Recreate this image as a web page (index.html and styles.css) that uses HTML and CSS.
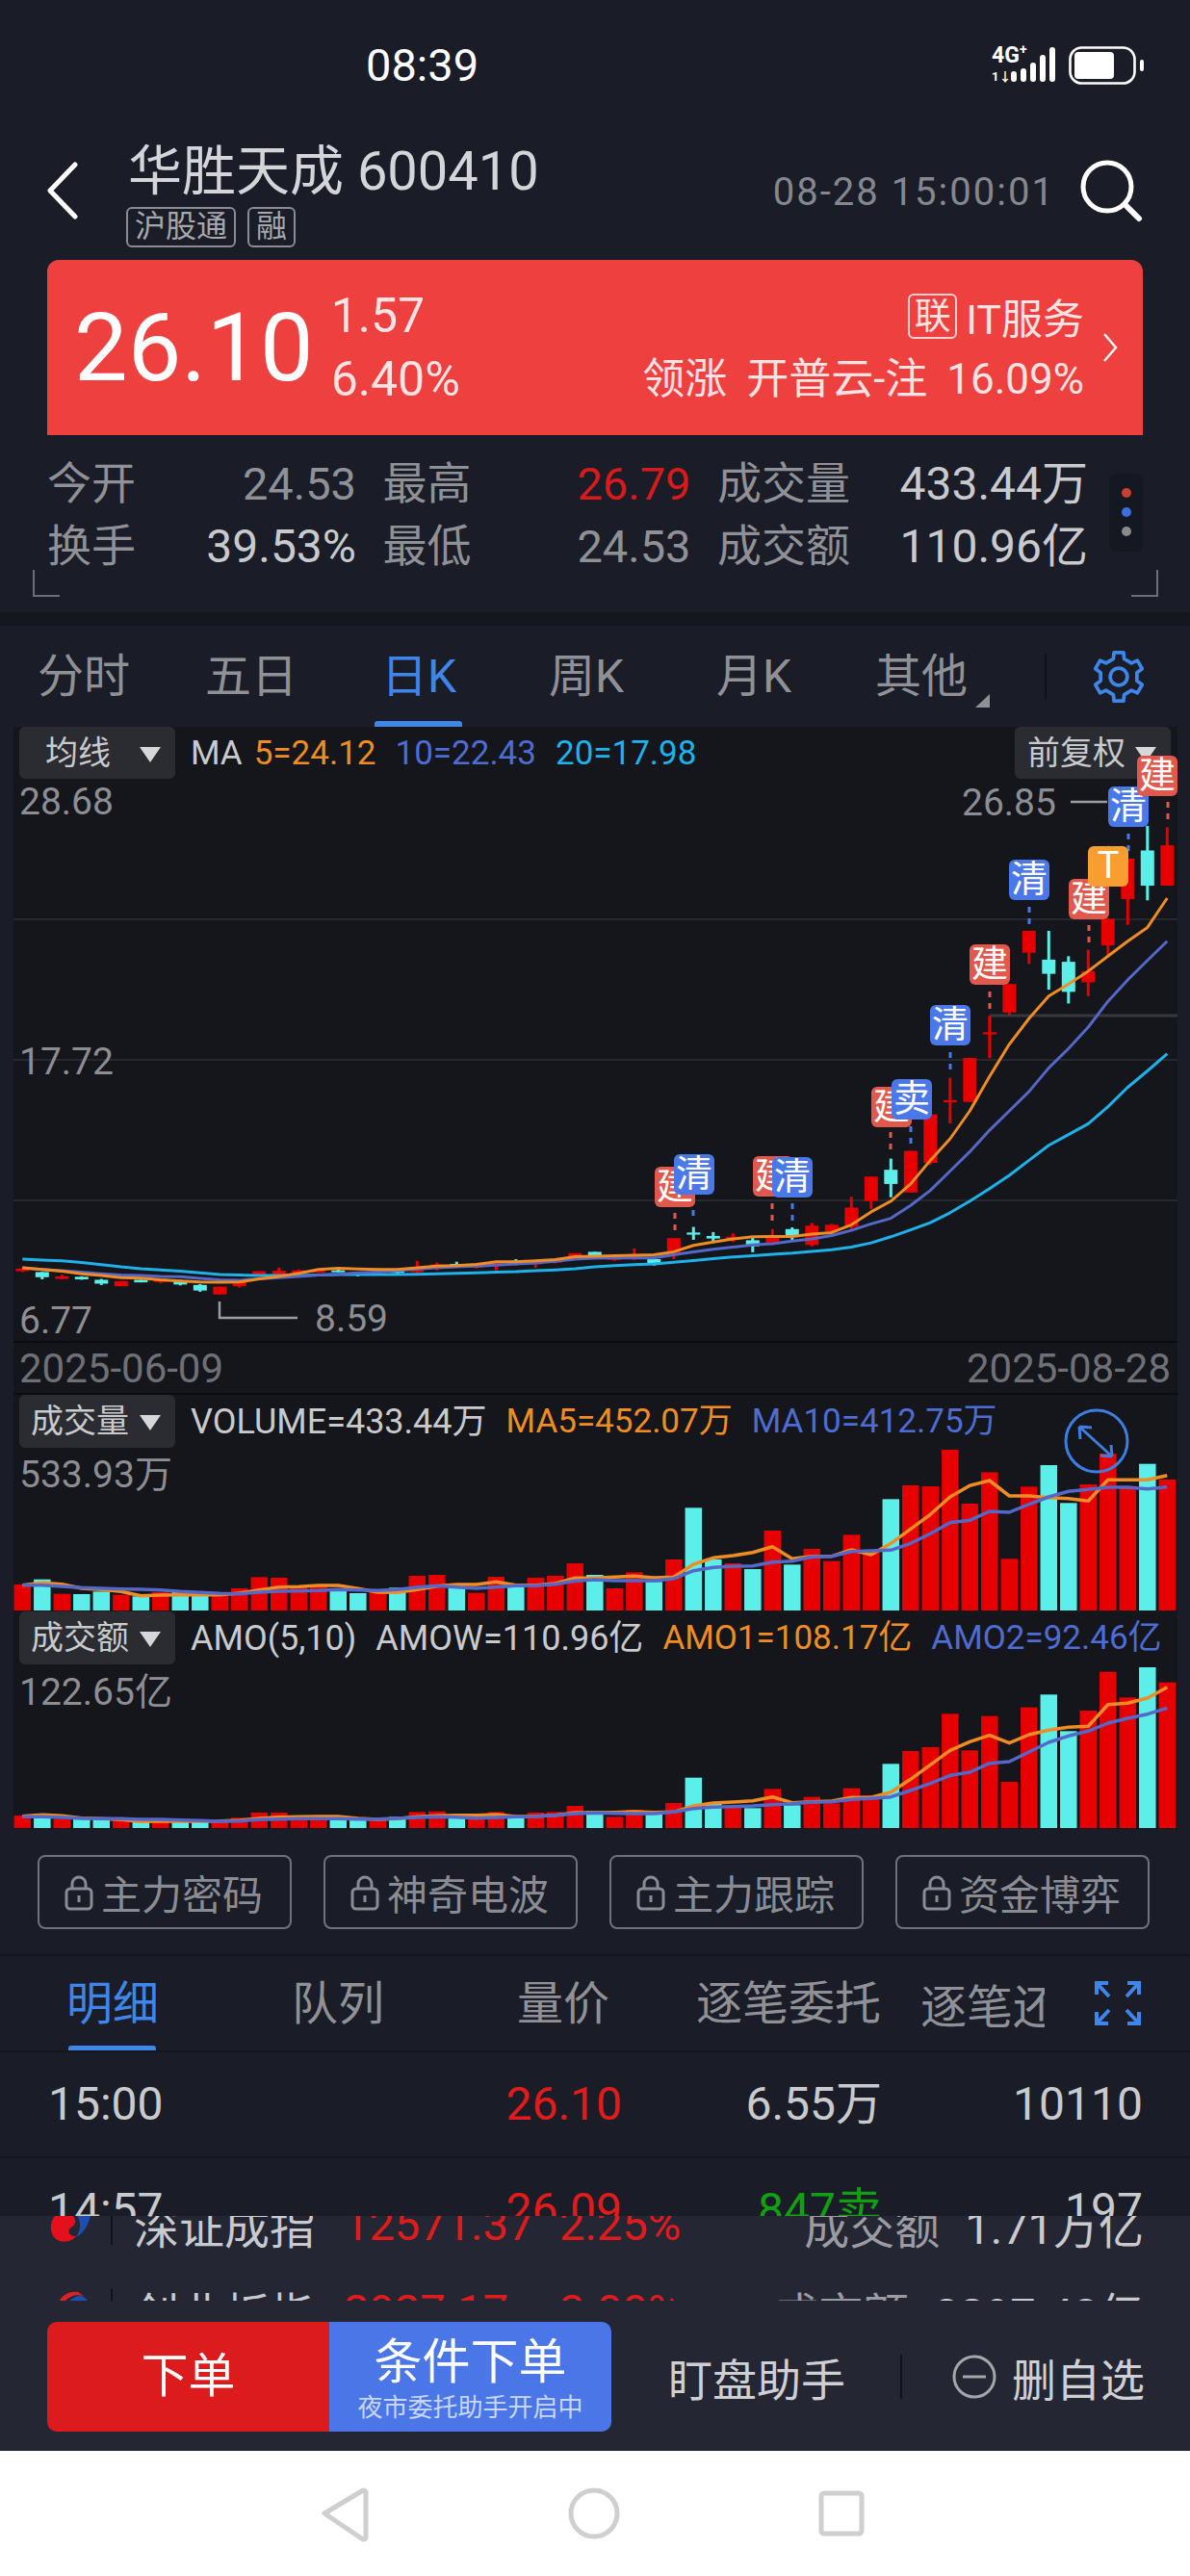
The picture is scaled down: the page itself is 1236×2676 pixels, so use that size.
FILE: index.html
```html
<!DOCTYPE html>
<html lang="en">
<head>
    <meta charset="UTF-8">
    <meta name="viewport" content="width=device-width, initial-scale=1.0">
    <title>华胜天成 600410</title>
    <link rel="stylesheet" href="styles.css">
</head>
<body>
    <div class="status-bar">
        <div class="clock">08:39</div>
        <div class="net">
            <div class="net-type"><span class="net-4g">4G<sup>+</sup></span><span class="net-sim">1↓</span></div>
            <svg class="signal" viewBox="0 0 46 36">
                <rect x="0" y="25" width="6" height="11" rx="3"/>
                <rect x="10" y="22" width="6" height="14" rx="3"/>
                <rect x="20" y="16" width="6" height="20" rx="3"/>
                <rect x="30" y="8" width="6" height="28" rx="3"/>
                <rect x="40" y="0" width="6" height="36" rx="3"/>
            </svg>
            <svg class="battery" viewBox="0 0 78 40">
                <rect x="1.5" y="1.5" width="67" height="37" rx="12" fill="none" stroke="#fff" stroke-width="2.6"/>
                <rect x="6" y="6" width="41" height="28" rx="4" fill="#fff"/>
                <rect x="74" y="14" width="4" height="12" rx="2" fill="#fff"/>
            </svg>
        </div>
    </div>

    <header class="header">
        <svg class="back-icon" viewBox="0 0 34 60">
            <path d="M30 3 L4 30 L30 57" fill="none" stroke="#fff" stroke-width="5" stroke-linecap="round" stroke-linejoin="round"/>
        </svg>
        <div class="stock-name">
            <h1 class="title">华胜天成 600410</h1>
            <div class="tags">
                <span class="tag">沪股通</span>
                <span class="tag">融</span>
            </div>
        </div>
        <div class="datetime">08-28 15:00:01</div>
        <svg class="search-icon" viewBox="0 0 66 66">
            <circle cx="29" cy="29" r="25" fill="none" stroke="#fff" stroke-width="5"/>
            <path d="M48 48 L62 62" stroke="#fff" stroke-width="6" stroke-linecap="round"/>
        </svg>
    </header>

    <section class="quote-card">
        <div class="last-price">26.10</div>
        <div class="change">
            <span>1.57</span>
            <span>6.40%</span>
        </div>
        <div class="sector">
            <div class="sector-name"><span class="sector-badge">联</span>IT服务</div>
            <div class="sector-lead">领涨 开普云-注 16.09%</div>
        </div>
        <svg class="card-arrow" viewBox="0 0 16 32">
            <path d="M2 2 L14 16 L2 30" fill="none" stroke="#fff" stroke-width="2.4"/>
        </svg>
    </section>

    <section class="stats">
        <div class="stats-grid">
            <div class="stat"><span class="stat-label">今开</span><span class="stat-dim">24.53</span></div>
            <div class="stat"><span class="stat-label">最高</span><span class="stat-red">26.79</span></div>
            <div class="stat"><span class="stat-label">成交量</span><span class="stat-value">433.44万</span></div>
            <div class="stat"><span class="stat-label">换手</span><span class="stat-value">39.53%</span></div>
            <div class="stat"><span class="stat-label">最低</span><span class="stat-dim">24.53</span></div>
            <div class="stat"><span class="stat-label">成交额</span><span class="stat-value">110.96亿</span></div>
        </div>
        <div class="page-dots"><i class="dot-red"></i><i class="dot-blue"></i><i class="dot-grey"></i></div>
        <i class="corner corner-left"></i>
        <i class="corner corner-right"></i>
    </section>

    <nav class="period-tabs">
        <div class="period">分时</div>
        <div class="period">五日</div>
        <div class="period active">日K</div>
        <div class="period">周K</div>
        <div class="period">月K</div>
        <div class="period more">其他</div>
        <i class="period-divider"></i>
        <svg class="gear-icon" viewBox="0 0 24 24">
            <path d="M9.57 4.06 L9.9 1.2 H14.1 L14.43 4.06 L17.66 5.93 L20.3 4.78 L22.4 8.42 L20.09 10.13 V13.87 L22.4 15.58 L20.3 19.22 L17.66 18.07 L14.43 19.94 L14.1 22.8 H9.9 L9.57 19.94 L6.34 18.07 L3.7 19.22 L1.6 15.58 L3.91 13.87 V10.13 L1.6 8.42 L3.7 4.78 L6.34 5.93 Z" fill="none" stroke="#3f86ea" stroke-width="1.6" stroke-linejoin="round"/>
            <circle cx="12" cy="12" r="3.8" fill="none" stroke="#3f86ea" stroke-width="1.6"/>
        </svg>
    </nav>

    <main class="chart">
        <div class="panel price-panel" id="price-panel">
            <div class="select select-left">均线<i class="caret"></i></div>
            <div class="legend">
                <span class="text-light legend-ma">MA</span>
                <span class="text-orange">5=24.12</span>
                <span class="text-blue">10=22.43</span>
                <span class="text-cyan">20=17.98</span>
            </div>
            <div class="select select-right">前复权<i class="caret"></i></div>
            <span class="axis axis-top">28.68</span>
            <span class="axis axis-mid">17.72</span>
            <span class="axis axis-low">6.77</span>
            <span class="axis peak-high">26.85</span>
            <span class="axis peak-low">8.59</span>
        </div>
        <div class="date-row">
            <span>2025-06-09</span>
            <span>2025-08-28</span>
        </div>
        <div class="panel volume-panel" id="volume-panel">
            <div class="select select-left">成交量<i class="caret"></i></div>
            <div class="legend">
                <span class="text-light">VOLUME=433.44万</span>
                <span class="text-orange">MA5=452.07万</span>
                <span class="text-blue">MA10=412.75万</span>
            </div>
            <span class="axis axis-top">533.93万</span>
        </div>
        <div class="panel amount-panel" id="amount-panel">
            <div class="select select-left">成交额<i class="caret"></i></div>
            <div class="legend">
                <span class="text-light">AMO(5,10)</span>
                <span class="text-light">AMOW=110.96亿</span>
                <span class="text-orange">AMO1=108.17亿</span>
                <span class="text-blue">AMO2=92.46亿</span>
            </div>
            <span class="axis axis-top">122.65亿</span>
        </div>
    </main>

    <div class="lock-row">
        <div class="lock-button"><svg class="lock-icon" viewBox="0 0 30 38"><path d="M8 16 V10 A7 7 0 0 1 22 10 V16" fill="none" stroke="currentColor" stroke-width="3"/><rect x="2" y="15" width="26" height="21" rx="4" fill="none" stroke="currentColor" stroke-width="3"/><rect x="13.5" y="22" width="3" height="7" fill="currentColor"/></svg>主力密码</div>
        <div class="lock-button"><svg class="lock-icon" viewBox="0 0 30 38"><path d="M8 16 V10 A7 7 0 0 1 22 10 V16" fill="none" stroke="currentColor" stroke-width="3"/><rect x="2" y="15" width="26" height="21" rx="4" fill="none" stroke="currentColor" stroke-width="3"/><rect x="13.5" y="22" width="3" height="7" fill="currentColor"/></svg>神奇电波</div>
        <div class="lock-button"><svg class="lock-icon" viewBox="0 0 30 38"><path d="M8 16 V10 A7 7 0 0 1 22 10 V16" fill="none" stroke="currentColor" stroke-width="3"/><rect x="2" y="15" width="26" height="21" rx="4" fill="none" stroke="currentColor" stroke-width="3"/><rect x="13.5" y="22" width="3" height="7" fill="currentColor"/></svg>主力跟踪</div>
        <div class="lock-button"><svg class="lock-icon" viewBox="0 0 30 38"><path d="M8 16 V10 A7 7 0 0 1 22 10 V16" fill="none" stroke="currentColor" stroke-width="3"/><rect x="2" y="15" width="26" height="21" rx="4" fill="none" stroke="currentColor" stroke-width="3"/><rect x="13.5" y="22" width="3" height="7" fill="currentColor"/></svg>资金博弈</div>
    </div>

    <div class="detail-tabs">
        <div class="detail-tab active">明细</div>
        <div class="detail-tab">队列</div>
        <div class="detail-tab">量价</div>
        <div class="detail-tab">逐笔委托</div>
        <div class="detail-clip">逐笔还原</div>
        <svg class="expand-icon" viewBox="0 0 48 46">
            <path d="M2 14 V2 H14 M2 2 L15 16 M46 14 V2 H34 M46 2 L33 16 M2 32 V44 H14 M2 44 L15 30 M46 32 V44 H34 M46 44 L33 30" fill="none" stroke="#3f86ea" stroke-width="4"/>
        </svg>
    </div>

    <div class="trades">
        <div class="trade"><span>15:00</span><span class="text-red">26.10</span><span>6.55万</span><span>10110</span></div>
        <div class="trade"><span>14:57</span><span class="text-red">26.09</span><span class="text-green">847卖</span><span>197</span></div>
    </div>

    <div class="bottom-panel">
        <div class="ticker">
            <div class="ticker-row">
                <svg class="index-logo" viewBox="0 0 46 46">
                    <path d="M26 8 H46 C44 24 38 33 30 37 C36 28 36 18 26 8 Z" fill="#1d4fb0"/>
                    <path d="M16 10 C4 12 0 30 8 38 C14 44 26 42 30 36 C22 36 20 30 26 26 C32 22 30 12 16 10 Z" fill="#e5101c"/>
                </svg>
                <i class="ticker-divider"></i>
                <span class="ticker-name">深证成指</span>
                <span class="ticker-price text-red">12571.37</span>
                <span class="ticker-pct text-red">2.25%</span>
                <span class="ticker-label">成交额</span>
                <span class="ticker-amount">1.71万亿</span>
            </div>
            <div class="ticker-row">
                <svg class="index-logo" viewBox="0 0 46 46">
                    <path d="M14 30 C20 10 32 6 38 9 C42 11 45 20 46 30 Z" fill="#1d4fb0"/>
                    <path d="M7 30 C10 8 22 2 32 4 L38 8 C26 5 16 10 11 30 Z" fill="#d8232a"/>
                </svg>
                <i class="ticker-divider"></i>
                <span class="ticker-name">创业板指</span>
                <span class="ticker-price text-red">2927.17</span>
                <span class="ticker-pct text-red">3.00%</span>
                <span class="ticker-label">成交额</span>
                <span class="ticker-amount">8297.48亿</span>
            </div>
        </div>
        <div class="actions">
            <div class="order-button">下单</div>
            <div class="condition-button">
                <span class="condition-title">条件下单</span>
                <span class="condition-sub">夜市委托助手开启中</span>
            </div>
            <div class="watch-helper">盯盘助手</div>
            <i class="action-divider"></i>
            <svg class="minus-icon" viewBox="0 0 46 46">
                <circle cx="23" cy="23" r="21" fill="none" stroke="#a4a6ab" stroke-width="3"/>
                <path d="M11 23 H35" stroke="#a4a6ab" stroke-width="3"/>
            </svg>
            <div class="remove-watch">删自选</div>
        </div>
    </div>

    <div class="nav-bar">
        <svg viewBox="0 0 60 60"><path d="M9 30 L49 6 Q52 6 52 9 L52 54 Q52 57 49 57 Z" fill="none" stroke="#cfcfcf" stroke-width="5" stroke-linejoin="round" transform="translate(-2 0)"/></svg>
        <svg viewBox="0 0 60 60"><circle cx="30" cy="30" r="24" fill="none" stroke="#cfcfcf" stroke-width="5"/></svg>
        <svg viewBox="0 0 60 60"><rect x="9" y="9" width="42" height="42" rx="3" fill="none" stroke="#cfcfcf" stroke-width="5"/></svg>
    </div>

    <script src="chart.js"></script>
</body>
</html>
```

FILE: styles.css
```css
* {
    margin: 0;
    padding: 0;
    box-sizing: border-box;
}

body {
    width: 1236px;
    height: 2676px;
    overflow: hidden;
    background: #1a1d27;
    color: #c8cacd;
    font-family: Roboto, 'Noto Sans CJK SC', sans-serif;
}

.text-red { color: #e01b1b; }
.text-green { color: #12a012; }
.text-light { color: #c8cacd; }
.text-orange { color: #f08c24; }
.text-blue { color: #4f6cd2; }
.text-cyan { color: #1fb1ea; }

/* status bar */
.status-bar {
    height: 130px;
    position: relative;
}

.clock {
    position: absolute;
    left: 380px;
    top: 40px;
    font-size: 47px;
    line-height: 56px;
    color: #fff;
}

.net {
    position: absolute;
    left: 1030px;
    top: 48px;
    display: flex;
    align-items: flex-start;
    color: #fff;
}

.net-type {
    width: 20px;
    display: flex;
    flex-direction: column;
    font-weight: 700;
    white-space: nowrap;
}

.net-4g {
    font-size: 23px;
    line-height: 20px;
}

.net-4g sup {
    font-size: 14px;
    line-height: 0;
}

.net-sim {
    margin-top: 5px;
    font-size: 13px;
    line-height: 13px;
}

.signal {
    width: 46px;
    height: 36px;
    fill: #fff;
    margin-top: 1px;
}

.battery {
    width: 78px;
    height: 40px;
    margin-left: 14px;
}

/* header */
.header {
    height: 140px;
    display: flex;
    align-items: flex-start;
}

.back-icon {
    width: 34px;
    height: 60px;
    margin: 38px 0 0 48px;
}

.stock-name {
    margin: 18px 0 0 51px;
}

.title {
    font-size: 56px;
    line-height: 60px;
    font-weight: 400;
    color: #d3d5d8;
    white-space: nowrap;
}

.tags {
    display: flex;
    gap: 12px;
    margin: 7px 0 0 -2px;
}

.tag {
    height: 42px;
    padding: 0 7px;
    border: 2px solid #8a8c92;
    border-radius: 6px;
    font-size: 32px;
    line-height: 36px;
    color: #a6a8ad;
}

.datetime {
    margin: 50px 0 0 243px;
    font-size: 40px;
    line-height: 40px;
    letter-spacing: 2px;
    color: #85878e;
    white-space: nowrap;
}

.search-icon {
    width: 66px;
    height: 66px;
    margin: 35px 49px 0 auto;
}

/* quote card */
.quote-card {
    height: 182px;
    margin: 0 49px;
    padding: 0 26px 0 28px;
    background: #ef4040;
    border-radius: 12px 12px 0 0;
    display: flex;
    align-items: center;
    color: #fff;
}

.last-price {
    font-size: 99px;
    line-height: 100px;
}

.change {
    margin-left: 18px;
    display: flex;
    flex-direction: column;
    font-size: 50px;
    line-height: 66px;
    color: #fbe3e3;
}

.sector {
    margin-left: auto;
    text-align: right;
    color: #fbe3e3;
}

.sector-name {
    height: 66px;
    display: flex;
    justify-content: flex-end;
    align-items: center;
    font-size: 43px;
}

.sector-badge {
    width: 51px;
    height: 47px;
    margin-right: 9px;
    border: 2px solid #f8cfcf;
    border-radius: 6px;
    font-size: 38px;
    line-height: 42px;
    text-align: center;
}

.sector-lead {
    font-size: 44px;
    line-height: 66px;
    word-spacing: 9px;
    white-space: nowrap;
}

.card-arrow {
    width: 16px;
    height: 32px;
    margin-left: 19px;
}

/* stats */
.stats {
    height: 184px;
    position: relative;
    padding: 18px 0 0 49px;
}

.stats-grid {
    display: grid;
    grid-template-columns: 321px 320px 385px;
    grid-auto-rows: 65px;
    column-gap: 27.5px;
    font-size: 48px;
    line-height: 65px;
}

.stat {
    display: flex;
    justify-content: space-between;
}

.stat-label {
    font-size: 46px;
    color: #8f9196;
}

.stat-value { color: #c8cacd; }

.stat-dim {
    font-size: 47px;
    color: #8f9196;
}

.stat-red {
    font-size: 47px;
    color: #d91a1a;
}

.page-dots {
    position: absolute;
    left: 1152px;
    top: 40px;
    width: 35px;
    height: 81px;
    padding: 15px 0 0;
    background: #141820;
    border-radius: 8px;
    display: flex;
    flex-direction: column;
    align-items: center;
    gap: 10px;
}

.page-dots i {
    width: 10px;
    height: 10px;
    border-radius: 50%;
}

.dot-red { background: #c8402f; }
.dot-blue { background: #3a70dd; }
.dot-grey { background: #8a8a8a; }

.corner {
    position: absolute;
    top: 140px;
    width: 28px;
    height: 28px;
    border-bottom: 2px solid #6c6f76;
}

.corner-left {
    left: 34px;
    border-left: 2px solid #6c6f76;
}

.corner-right {
    left: 1175px;
    border-right: 2px solid #6c6f76;
}

/* period tabs */
.period-tabs {
    height: 119px;
    padding-top: 14px;
    background: linear-gradient(#14171e 14px, transparent 14px);
    display: flex;
    align-items: center;
    position: relative;
}

.period {
    width: 174px;
    height: 105px;
    font-size: 48px;
    line-height: 105px;
    text-align: center;
    color: #8f9196;
    position: relative;
}

.period.active {
    color: #3f86ea;
}

.period.active::after {
    content: '';
    position: absolute;
    left: 41px;
    bottom: 0;
    width: 91px;
    height: 6px;
    background: #3f86ea;
    border-radius: 3px 3px 0 0;
}

.period.more::after {
    content: '';
    position: absolute;
    left: 143px;
    top: 71px;
    width: 15px;
    height: 14px;
    background: #8f9196;
    clip-path: polygon(100% 0, 100% 100%, 0 100%);
}

.period-divider {
    width: 2px;
    height: 48px;
    margin-left: 41px;
    background: #11131a;
}

.gear-icon {
    width: 56px;
    height: 56px;
    margin-left: 47px;
}

/* chart */
.chart {
    height: 1145px;
    margin: 0 13px 0 14px;
    background: #14161b;
}

.panel {
    position: relative;
}

.panel svg {
    position: absolute;
    left: 0;
    top: 0;
    width: 100%;
    height: 100%;
}

.price-panel { height: 638px; }
.volume-panel { height: 225px; }
.amount-panel { height: 226px; }

.select {
    position: absolute;
    top: 0;
    z-index: 1;
    width: 162px;
    height: 54px;
    background: #2a2c31;
    border-radius: 6px;
    padding-left: 27px;
    font-size: 34px;
    line-height: 54px;
    color: #c8cacd;
}

.select-left { left: 6px; }
.select-right { left: 1040px; padding-left: 13px; }

.volume-panel .select,
.amount-panel .select {
    padding-left: 12px;
    height: 55px;
    line-height: 55px;
}

.caret {
    position: absolute;
    right: 15px;
    top: 21px;
    width: 22px;
    height: 16px;
    background: #d6d7d9;
    clip-path: polygon(0 0, 100% 0, 50% 100%);
}

.legend {
    position: absolute;
    z-index: 1;
    left: 184px;
    top: 7px;
    display: flex;
    gap: 20px;
    font-size: 35px;
    line-height: 42px;
    white-space: nowrap;
}

.legend-ma {
    margin-right: -8px;
}

.volume-panel .text-light,
.amount-panel .text-light {
    font-size: 36px;
}

.axis {
    position: absolute;
    z-index: 1;
    font-size: 39px;
    line-height: 44px;
    color: #8c8e93;
    white-space: nowrap;
}

.axis-top { left: 6px; top: 56px; }
.axis-mid { left: 6px; top: 326px; }
.axis-low { left: 6px; top: 595px; }
.peak-high { left: 985px; top: 57px; }
.peak-low { left: 313px; top: 593px; }

.volume-panel .axis-top { top: 61px; }
.amount-panel .axis-top { top: 62px; }

.date-row {
    height: 56px;
    padding: 0 7px 0 6px;
    border-top: 2px solid #0b0c0f;
    border-bottom: 2px solid #0b0c0f;
    display: flex;
    justify-content: space-between;
    font-size: 42px;
    line-height: 54px;
    color: #6e7076;
}

/* trade markers over the candles */
.marker {
    position: absolute;
    z-index: 2;
    width: 42px;
    height: 42px;
    border-radius: 6px;
    font-size: 38px;
    line-height: 40px;
    text-align: center;
    color: #fff;
}

.marker-build { background: #e2584c; }
.marker-clear { background: #4a78e8; }
.marker-swing { background: #f89e30; }

/* locked tools */
.lock-row {
    height: 132px;
    padding: 27px 42px 0 39px;
    display: flex;
    justify-content: space-between;
    border-bottom: 2px solid #14171e;
}

.lock-button {
    width: 264px;
    height: 77px;
    border: 2px solid #6f7279;
    border-radius: 8px;
    display: flex;
    align-items: center;
    padding-left: 26px;
    gap: 8px;
    font-size: 42px;
    color: #8a8c93;
    white-space: nowrap;
}

.lock-icon {
    width: 30px;
    height: 38px;
}

/* detail tabs */
.detail-tabs {
    height: 100px;
    display: flex;
    align-items: center;
    position: relative;
    border-bottom: 2px solid #14171e;
    font-size: 48px;
    color: #8f9196;
}

.detail-tab {
    width: 234px;
    height: 100%;
    line-height: 100px;
    text-align: center;
    position: relative;
}

.detail-tab.active {
    color: #3f86ea;
}

.detail-tab.active::after {
    content: '';
    position: absolute;
    left: 71px;
    bottom: 0;
    width: 91px;
    height: 5px;
    background: #3f86ea;
    border-radius: 3px 3px 0 0;
}

.detail-clip {
    width: 129px;
    margin-left: 20px;
    overflow: hidden;
    white-space: nowrap;
}

.expand-icon {
    width: 48px;
    height: 46px;
    margin-left: 52px;
}

.trades {
    height: 170px;
    overflow: hidden;
}

.trade {
    height: 110px;
    padding: 0 50px;
    display: grid;
    grid-template-columns: 296px 300px 270px 271px;
    font-size: 48px;
    line-height: 108px;
    border-bottom: 2px solid #14171e;
}

.trade span + span {
    text-align: right;
}

/* bottom panel */
.bottom-panel {
    height: 244px;
    background: #242733;
}

.ticker {
    height: 88px;
    overflow: hidden;
}

.ticker-row {
    height: 90px;
    margin-top: -37px;
    padding: 0 48px 0 49px;
    display: flex;
    align-items: center;
    font-size: 47px;
    position: relative;
    color: #c8cacd;
}

.ticker-row + .ticker-row {
    margin-top: 0;
}

.index-logo {
    width: 46px;
    height: 46px;
}

.ticker-divider {
    width: 2px;
    height: 44px;
    margin-left: 20px;
    background: #11131a;
}

.ticker-name { margin-left: 22px; width: 218px; }
.ticker-price { width: 224px; }
.ticker-pct { width: 120px; }

.ticker-label {
    margin-left: auto;
    font-size: 47px;
    color: #9a9ca2;
}

.ticker-amount {
    margin-left: 26px;
    text-align: right;
}

.actions {
    height: 114px;
    margin-top: 22px;
    padding-left: 49px;
    display: flex;
    align-items: center;
}

.order-button {
    width: 293px;
    height: 100%;
    background: #dc1c1c;
    border-radius: 10px 0 0 10px;
    font-size: 49px;
    line-height: 114px;
    text-align: center;
    color: #fff;
}

.condition-button {
    width: 293px;
    height: 100%;
    background: #4a76e8;
    border-radius: 0 10px 10px 0;
    display: flex;
    flex-direction: column;
    align-items: center;
    padding-top: 12px;
    color: #fff;
}

.condition-title {
    font-size: 50px;
    line-height: 60px;
}

.condition-sub {
    font-size: 26px;
    line-height: 34px;
    color: #c9d6f8;
}

.watch-helper {
    margin-left: 59px;
    font-size: 46px;
    color: #cfd0d3;
    white-space: nowrap;
}

.action-divider {
    width: 2px;
    height: 46px;
    margin-left: 57px;
    background: #11131a;
}

.minus-icon {
    width: 46px;
    height: 46px;
    margin-left: 52px;
}

.remove-watch {
    margin-left: 16px;
    font-size: 46px;
    color: #cfd0d3;
    white-space: nowrap;
}

/* android nav bar */
.nav-bar {
    height: 130px;
    background: #fff;
    padding-left: 330px;
    display: flex;
    gap: 197px;
    align-items: center;
}

.nav-bar svg {
    width: 60px;
    height: 60px;
}
```

FILE: chart.js
```js
// Daily K-line data. Values are positions read off a 59 day chart,
// so each panel only maps them into its own box.
const UP = '#e60000';
const DOWN = '#5ceee9';

const xAt = (i) => 9.3 + 20.5 * i;
const priceY = (v) => v / 2.24 - 5;
const volumeY = (v) => v / 3 - 19;
const amountY = (v) => v / 3 - 244;

// [up?, bodyTop, bodyBottom, high, low]
const candles = [
    [1, 1272, 1278, 1270, 1280], [0, 1280, 1292, 1280, 1297], [1, 1290, 1296, 1286, 1297],
    [0, 1291, 1297, 1290, 1298], [0, 1298, 1307, 1296, 1310], [1, 1301, 1313, 1301, 1313],
    [0, 1298, 1304, 1298, 1304], [1, 1296, 1303, 1296, 1306], [0, 1301, 1309, 1298, 1311],
    [0, 1310, 1323, 1308, 1326], [1, 1314, 1332, 1314, 1332], [1, 1304, 1313, 1303, 1316],
    [1, 1278, 1290, 1278, 1290], [1, 1277, 1290, 1270, 1290], [1, 1276, 1284, 1274, 1288],
    [1, 1277, 1281, 1275, 1282], [0, 1276, 1279, 1270, 1280], [0, 1280, 1288, 1280, 1290],
    [1, 1272, 1280, 1270, 1282], [0, 1276, 1282, 1274, 1284], [1, 1268, 1280, 1254, 1282],
    [1, 1262, 1272, 1258, 1276], [0, 1261, 1267, 1256, 1270], [1, 1262, 1270, 1260, 1272],
    [1, 1254, 1265, 1254, 1276], [0, 1254, 1262, 1250, 1264], [1, 1254, 1262, 1252, 1270],
    [1, 1250, 1258, 1250, 1260], [1, 1236, 1250, 1236, 1252], [0, 1233, 1246, 1233, 1248],
    [1, 1245, 1252, 1245, 1254], [1, 1240, 1250, 1225, 1252], [0, 1250, 1262, 1246, 1265],
    [1, 1201, 1236, 1201, 1250], [0, 1188, 1193, 1175, 1205], [0, 1196, 1202, 1187, 1212],
    [1, 1198, 1205, 1190, 1210], [0, 1206, 1220, 1200, 1234], [1, 1196, 1214, 1180, 1214],
    [0, 1180, 1196, 1176, 1208], [1, 1172, 1217, 1166, 1220], [1, 1170, 1185, 1168, 1190],
    [1, 1130, 1175, 1105, 1180], [1, 1058, 1115, 1058, 1133], [0, 1042, 1075, 1016, 1106],
    [1, 998, 1095, 998, 1095], [1, 913, 1026, 913, 1030], [1, 880, 885, 828, 934],
    [1, 782, 884, 782, 884], [1, 722, 727, 684, 782], [1, 610, 676, 610, 682],
    [1, 486, 537, 486, 563], [0, 553, 586, 486, 623], [0, 558, 628, 545, 655],
    [1, 580, 606, 530, 638], [1, 458, 520, 458, 545], [1, 318, 412, 318, 472],
    [0, 299, 381, 242, 415], [1, 287, 381, 245, 381]
];

const ma5 = [1270, 1274, 1278, 1284, 1288, 1293, 1294, 1298, 1301, 1303, 1304, 1303, 1296, 1290, 1283, 1274, 1271, 1273, 1274, 1274, 1270, 1266, 1265, 1262, 1256, 1256, 1254, 1251, 1244, 1243, 1242, 1241, 1240, 1233, 1218, 1210, 1203, 1198, 1197, 1197, 1192, 1188, 1170, 1140, 1115, 1075, 1020, 970, 905, 825, 750, 690, 638, 610, 580, 545, 510, 478, 410];
const ma10 = [1270, 1274, 1277, 1280, 1284, 1287, 1288, 1290, 1291, 1295, 1298, 1299, 1296, 1293, 1290, 1287, 1285, 1282, 1280, 1277, 1273, 1270, 1268, 1266, 1264, 1261, 1259, 1255, 1250, 1248, 1247, 1247, 1247, 1240, 1233, 1227, 1222, 1217, 1214, 1208, 1203, 1195, 1183, 1168, 1155, 1125, 1090, 1045, 1000, 950, 905, 860, 805, 760, 710, 650, 600, 555, 510];
const ma20 = [1250, 1252, 1254, 1258, 1263, 1268, 1272, 1275, 1278, 1282, 1286, 1287, 1288, 1288, 1288, 1287, 1286, 1286, 1286, 1286, 1285, 1284, 1283, 1282, 1280, 1279, 1277, 1275, 1272, 1268, 1265, 1263, 1261, 1257, 1253, 1249, 1245, 1242, 1239, 1236, 1232, 1228, 1222, 1212, 1198, 1182, 1165, 1142, 1115, 1086, 1055, 1020, 985, 960, 935, 895, 850, 812, 772];

const volumeTops = [648, 632, 677, 678, 670, 680, 685, 672, 672, 680, 680, 660, 625, 627, 655, 650, 668, 675, 672, 658, 621, 618, 650, 674, 624, 655, 627, 621, 582, 618, 660, 610, 640, 570, 409, 570, 582, 600, 480, 586, 537, 575, 493, 545, 382, 339, 342, 228, 396, 298, 568, 343, 276, 394, 336, 240, 345, 272, 321];
const volumeMa5 = [650, 643, 647, 660, 664, 670, 683, 681, 680, 680, 680, 675, 665, 656, 655, 651, 651, 661, 672, 673, 664, 653, 648, 648, 640, 650, 650, 645, 628, 628, 625, 622, 627, 625, 585, 565, 558, 548, 530, 568, 560, 560, 540, 555, 520, 475, 430, 375, 340, 324, 372, 372, 377, 380, 388, 322, 322, 322, 308];
const volumeMa10 = [650, 650, 654, 658, 660, 662, 663, 665, 670, 673, 676, 677, 672, 669, 668, 667, 664, 665, 667, 664, 657, 652, 656, 660, 656, 652, 652, 647, 637, 633, 636, 636, 636, 630, 605, 595, 591, 590, 578, 575, 562, 560, 545, 543, 541, 520, 490, 455, 448, 420, 423, 398, 375, 358, 352, 345, 345, 350, 344];

const amountTops = [1368, 1362, 1378, 1380, 1378, 1382, 1385, 1380, 1382, 1385, 1385, 1375, 1359, 1359, 1372, 1370, 1376, 1378, 1378, 1372, 1357, 1355, 1366, 1380, 1357, 1368, 1359, 1357, 1338, 1354, 1372, 1350, 1365, 1329, 1250, 1330, 1338, 1345, 1285, 1336, 1310, 1330, 1283, 1305, 1207, 1167, 1155, 1051, 1165, 1058, 1263, 1031, 991, 1105, 1041, 920, 1000, 906, 953];
const amountMa5 = [1370, 1366, 1369, 1376, 1378, 1381, 1387, 1386, 1386, 1386, 1385, 1383, 1377, 1373, 1372, 1371, 1371, 1377, 1380, 1378, 1372, 1369, 1367, 1367, 1365, 1371, 1370, 1367, 1359, 1359, 1358, 1356, 1358, 1357, 1338, 1329, 1326, 1322, 1310, 1328, 1325, 1323, 1312, 1312, 1295, 1255, 1210, 1165, 1138, 1118, 1142, 1116, 1102, 1093, 1090, 1022, 1018, 1002, 968];
const amountMa10 = [1372, 1372, 1374, 1377, 1378, 1378, 1380, 1380, 1382, 1384, 1386, 1385, 1381, 1379, 1378, 1378, 1378, 1379, 1379, 1377, 1374, 1372, 1373, 1376, 1374, 1372, 1371, 1367, 1362, 1360, 1361, 1362, 1362, 1357, 1346, 1342, 1340, 1338, 1334, 1331, 1326, 1325, 1318, 1315, 1310, 1290, 1268, 1243, 1233, 1205, 1200, 1170, 1140, 1120, 1105, 1080, 1065, 1052, 1033];

// text, class, left, top of the flag, then x, y1, y2 of its dashed stem (page px)
const markers = [
    ['建', 'marker-build', 680, 1212, 701, 1260, 1281],
    ['清', 'marker-clear', 700, 1199, 720, 1245, 1265],
    ['建', 'marker-build', 782, 1201, 802, 1250, 1270],
    ['清', 'marker-clear', 802, 1202, 823, 1250, 1270],
    ['建', 'marker-build', 905, 1129, 925, 1176, 1200],
    ['卖', 'marker-clear', 926, 1121, 946, 1170, 1192],
    ['清', 'marker-clear', 966, 1044, 987, 1093, 1112],
    ['建', 'marker-build', 1007, 981, 1028, 1030, 1050],
    ['清', 'marker-clear', 1048, 893, 1069, 942, 962],
    ['建', 'marker-build', 1110, 913, 1131, 961, 982],
    ['T', 'marker-swing', 1130, 879, 1151, 879, 879],
    ['清', 'marker-clear', 1151, 817, 1172, 866, 885],
    ['建', 'marker-build', 1181, 785, 1213, 833, 855]
];

const CHART_LEFT = 14;
const PRICE_TOP = 755;

function polyline(values, mapY, color, width) {
    const points = values.map((v, i) => `${xAt(i).toFixed(1)},${mapY(v).toFixed(1)}`).join(' ');
    return `<polyline points="${points}" fill="none" stroke="${color}" stroke-width="${width}" stroke-linejoin="round"/>`;
}

function addSvg(panel, width, height, content) {
    panel.insertAdjacentHTML('afterbegin',
        `<svg viewBox="0 0 ${width} ${height}">${content}</svg>`);
}

function drawPrice() {
    const panel = document.getElementById('price-panel');
    let out = '';

    [200, 346, 492].forEach((y) => {
        out += `<line x1="0" x2="1209" y1="${y}" y2="${y}" stroke="#26282e" stroke-width="2"/>`;
    });
    out += '<line x1="1014" x2="1209" y1="300" y2="300" stroke="#36383c" stroke-width="3"/>';

    candles.forEach(([up, top, bottom, high, low], i) => {
        const color = up ? UP : DOWN;
        const x = xAt(i);
        out += `<line x1="${x}" x2="${x}" y1="${priceY(high)}" y2="${priceY(low)}" stroke="${color}" stroke-width="3"/>`;
        out += `<rect x="${x - 7}" y="${priceY(top)}" width="14" height="${Math.max((bottom - top) / 2.24, 2)}" fill="${color}"/>`;
    });

    out += polyline(ma20, priceY, '#1fb1ea', 3);
    out += polyline(ma10, priceY, '#5468c8', 3);
    out += polyline(ma5, priceY, '#f08c24', 3);

    // high / low callouts
    out += `<path d="M1098 78 H1136" stroke="#9a9ca0" stroke-width="2.5"/>`;
    out += `<path d="M214 597 V614 H295" fill="none" stroke="#9a9ca0" stroke-width="2.5"/>`;

    markers.forEach(([text, cls, left, top, x, y1, y2]) => {
        const color = cls === 'marker-build' ? '#e2584c' : '#4a78e8';
        out += `<line x1="${x - CHART_LEFT}" x2="${x - CHART_LEFT}" y1="${y1 - PRICE_TOP}" y2="${y2 - PRICE_TOP}" stroke="${color}" stroke-width="3" stroke-dasharray="6 6"/>`;

        const flag = document.createElement('div');
        flag.className = `marker ${cls}`;
        flag.textContent = text;
        flag.style.left = `${left - CHART_LEFT}px`;
        flag.style.top = `${top - PRICE_TOP}px`;
        panel.appendChild(flag);
    });

    addSvg(panel, 1209, 638, out);
}

function drawBars(height, tops, mapY, lineA, lineB) {
    const base = height - 1;
    let out = '';

    tops.forEach((top, i) => {
        const color = candles[i][0] ? UP : DOWN;
        const y = mapY(top);
        const left = Math.max(xAt(i) - 8.75, 0);
        const right = xAt(i) + 8.75;
        out += `<rect x="${left}" y="${y}" width="${right - left}" height="${base - y}" fill="${color}"/>`;
    });

    out += polyline(lineA, mapY, '#f08c24', 3.5);
    out += polyline(lineB, mapY, '#5468c8', 3.5);

    return out;
}

drawPrice();

let volumeSvg = drawBars(225, volumeTops, volumeY, volumeMa5, volumeMa10);
// zoom handle over the last bars
volumeSvg += `
    <ellipse cx="1125" cy="48" rx="32" ry="32" fill="none" stroke="#3d7fe0" stroke-width="3"/>
    <path d="M1107 33 L1141 64 M1107 33 L1108 46 M1107 33 L1120 34 M1141 64 L1140 52 M1141 64 L1129 63" fill="none" stroke="#3d7fe0" stroke-width="3"/>`;
addSvg(document.getElementById('volume-panel'), 1209, 225, volumeSvg);

addSvg(document.getElementById('amount-panel'), 1209, 226,
    drawBars(226, amountTops, amountY, amountMa5, amountMa10));
```
